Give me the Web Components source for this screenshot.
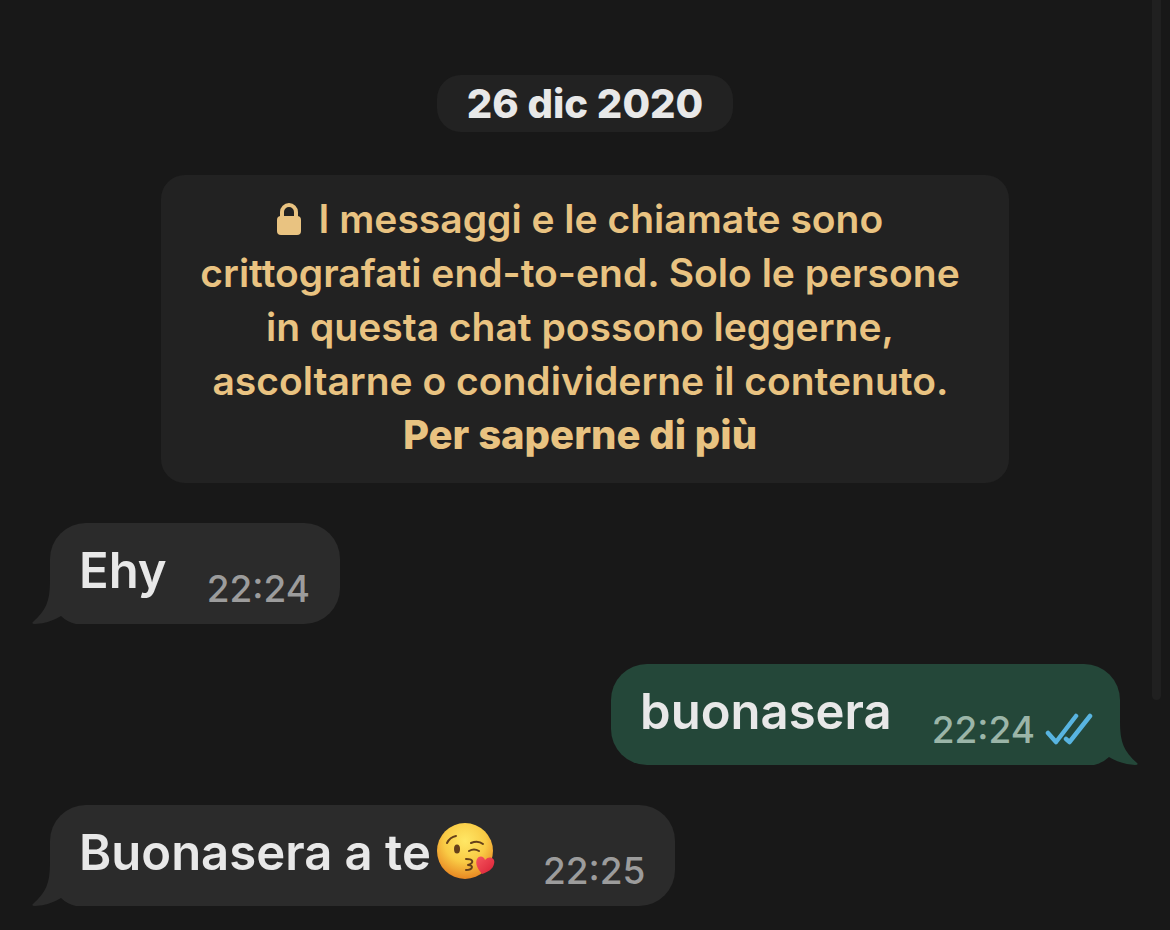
<!DOCTYPE html>
<html lang="it">
<head>
<meta charset="utf-8">
<meta name="viewport" content="width=device-width, initial-scale=1">
<title>Chat</title>
<style>
    html {
        background: #181818;
    }
    body {
        margin: 0;
        font-family: Inter, "Liberation Sans", sans-serif;
        color: #e8e8e8;
    }
</style>
</head>
<body>
<chat-thread>
    <date-pill>26 dic 2020</date-pill>
    <chat-notice link-more="#info">I messaggi e le chiamate sono crittografati end-to-end. Solo le persone in questa chat possono leggerne, ascoltarne o condividerne il contenuto.</chat-notice>
    <chat-message time="22:24">Ehy</chat-message>
    <chat-message time="22:24" sent>buonasera</chat-message>
    <chat-message time="22:25">Buonasera a te<kiss-emoji></kiss-emoji></chat-message>
</chat-thread>

<script>
class ChatElement extends HTMLElement {
    constructor() {
        super()
        this.attachShadow( { mode: "open" } )
    }
    connectedCallback() {
        const template = document.createElement('template')
        template.innerHTML = this.getStyle() + this.getTemplate()
        this.shadowRoot.replaceChildren(template.content.cloneNode(true))
    }
}

class ChatThread extends ChatElement {
    getTemplate() {
        return `
            <main><slot></slot></main>
            <div class="thumb"></div>
        `
    }
    getStyle() {
        return `
        <style>
            :host {
                display: block;
            }
            main {
                display: flex;
                flex-direction: column;
                gap: 40px;
                padding: 75px 50px 24px;
            }
            /* scroll position, floats over the thread */
            .thumb {
                position: absolute;
                top: 0;
                right: 9px;
                width: 9px;
                height: 700px;
                border-radius: 0 0 5px 5px;
                background: #202020;
            }
        </style>
        `
    }
}
customElements.define('chat-thread', ChatThread)

class DatePill extends ChatElement {
    getTemplate() {
        return `<time datetime="2020-12-26"><slot></slot></time>`
    }
    getStyle() {
        return `
        <style>
            :host {
                display: block;
                align-self: center;
                margin-bottom: 3px;
                padding: 0 30px;
                border-radius: 24px;
                background: #222222;
                font-size: 40px;
                font-weight: 800;
                line-height: 57px;
            }
        </style>
        `
    }
}
customElements.define('date-pill', DatePill)

class ChatNotice extends ChatElement {
    getTemplate() {
        return `
            <p>
                <svg viewBox="0 0 24 32" aria-hidden="true">
                    <path d="M5 15V9a7 7 0 0 1 14 0V15" fill="none" stroke="currentColor" stroke-width="4"/>
                    <rect y="13" width="24" height="19" rx="4" fill="currentColor"/>
                </svg>
                <slot></slot>
                <a href="${this.getAttribute('link-more')}">Per saperne di più</a>
            </p>
        `
    }
    getStyle() {
        return `
        <style>
            :host {
                display: block;
                align-self: center;
                box-sizing: border-box;
                width: 100%;
                max-width: 848px;
                padding: 17px 38px 21px 28px;
                border-radius: 24px;
                background: #222222;
                color: #e9c381;
                font-size: 39px;
                font-weight: 600;
                line-height: 54px;
                text-align: center;
            }
            p {
                margin: 0;
            }
            svg {
                width: 24px;
                height: 32px;
                margin-right: 8px;
                vertical-align: -2px;
            }
            a {
                display: inline-block;
                color: inherit;
                font-size: 40px;
                font-weight: 800;
                text-decoration: none;
            }
        </style>
        `
    }
}
customElements.define('chat-notice', ChatNotice)

class ChatMessage extends ChatElement {
    getTemplate() {
        const time = this.getAttribute('time')
        const ticks = `
            <svg class="ticks" viewBox="0 0 48 34" role="img" aria-label="Letto">
                <path d="M3 20l8 9L31 3M21 26l3.500 3L45 3" fill="none" stroke="#58b4e0" stroke-width="4.500" stroke-linecap="round" stroke-linejoin="round"/>
            </svg>
        `
        return `
            <svg class="tail" viewBox="0 0 44 44" aria-hidden="true">
                <path d="M18 0C18 22 14 30 1 42Q-1 44 3 44Q18 43 29 36Q35 42 44 44V0Z" fill="currentColor"/>
            </svg>
            <div class="text"><slot></slot></div>
            <div class="meta"><time>${time}</time>${this.hasAttribute('sent') ? ticks : ''}</div>
        `
    }
    getStyle() {
        return `
        <style>
            :host {
                --bubble: #2b2b2b;
                position: relative;
                display: flex;
                align-items: flex-end;
                align-self: flex-start;
                gap: 40px;
                box-sizing: border-box;
                min-height: 101px;
                padding: 0 30px 0 29px;
                border-radius: 36px 36px 36px 0;
                background: linear-gradient(var(--bubble), var(--bubble)) 0 0 / 100% calc(100% - 44px) no-repeat,
                    linear-gradient(var(--bubble), var(--bubble)) 26px 100% / 100% 44px no-repeat;
            }
            :host([sent]) {
                --bubble: #244739;
                align-self: flex-end;
                padding-right: 27px;
                border-radius: 36px 36px 0 36px;
                background: linear-gradient(var(--bubble), var(--bubble)) 0 0 / 100% calc(100% - 44px) no-repeat,
                    linear-gradient(var(--bubble), var(--bubble)) -26px 100% / 100% 44px no-repeat;
            }
            .tail {
                position: absolute;
                left: -18px;
                bottom: 0;
                width: 44px;
                height: 44px;
                color: var(--bubble);
            }
            :host([sent]) .tail {
                left: auto;
                right: -18px;
                transform: scaleX(-1);
            }
            /* keeps the text above the tail */
            .text,
            .meta {
                position: relative;
            }
            .text {
                padding-bottom: 23px;
                font-size: 49px;
                font-weight: 600;
                line-height: 60px;
            }
            .meta {
                display: flex;
                align-items: center;
                gap: 10px;
                padding-bottom: 15px;
                color: #9c9c9c;
                font-size: 37px;
                font-weight: 500;
                line-height: 40px;
            }
            :host([sent]) .meta {
                color: #9bb5a8;
            }
            .ticks {
                width: 48px;
                height: 34px;
            }
        </style>
        `
    }
}
customElements.define('chat-message', ChatMessage)

class KissEmoji extends ChatElement {
    getTemplate() {
        return `
            <svg viewBox="0 0 60 60" role="img" aria-label="😘">
                <defs>
                    <radialGradient id="face" cx="50%" cy="32%" r="68%">
                        <stop offset="0" stop-color="#ffe765"/>
                        <stop offset=".55" stop-color="#f9cb45"/>
                        <stop offset="1" stop-color="#e88722"/>
                    </radialGradient>
                    <linearGradient id="heart" x1="0" y1="0" x2="1" y2="1">
                        <stop offset="0" stop-color="#f6575e"/>
                        <stop offset="1" stop-color="#d91f35"/>
                    </linearGradient>
                </defs>
                <circle cx="29" cy="28" r="28" fill="url(#face)"/>
                <ellipse cx="21" cy="26" rx="3" ry="4.500" fill="#65401a"/>
                <g fill="none" stroke="#65401a" stroke-width="2" stroke-linecap="round" stroke-linejoin="round">
                    <path d="M11 20Q14 14 20 13"/>
                    <path d="M35 20Q42 17 47 21"/>
                    <path d="M33 28Q38 25 43 28"/>
                    <path d="M30 36C38 36 38 40 32 42C38 42 37 47 30 47"/>
                </g>
                <path d="M46 51C41 45 39 40 41 36C43 32 48 33 49 37C53 32 60 35 58 41C57 46 52 49 46 51Z" fill="url(#heart)"/>
            </svg>
        `
    }
    getStyle() {
        return `
        <style>
            :host {
                display: inline-block;
                margin: 0 7px 0 5px;
                height: 60px;
                vertical-align: top;
            }
            svg {
                display: block;
                width: 60px;
                height: 60px;
            }
        </style>
        `
    }
}
customElements.define('kiss-emoji', KissEmoji)
</script>
</body>
</html>
